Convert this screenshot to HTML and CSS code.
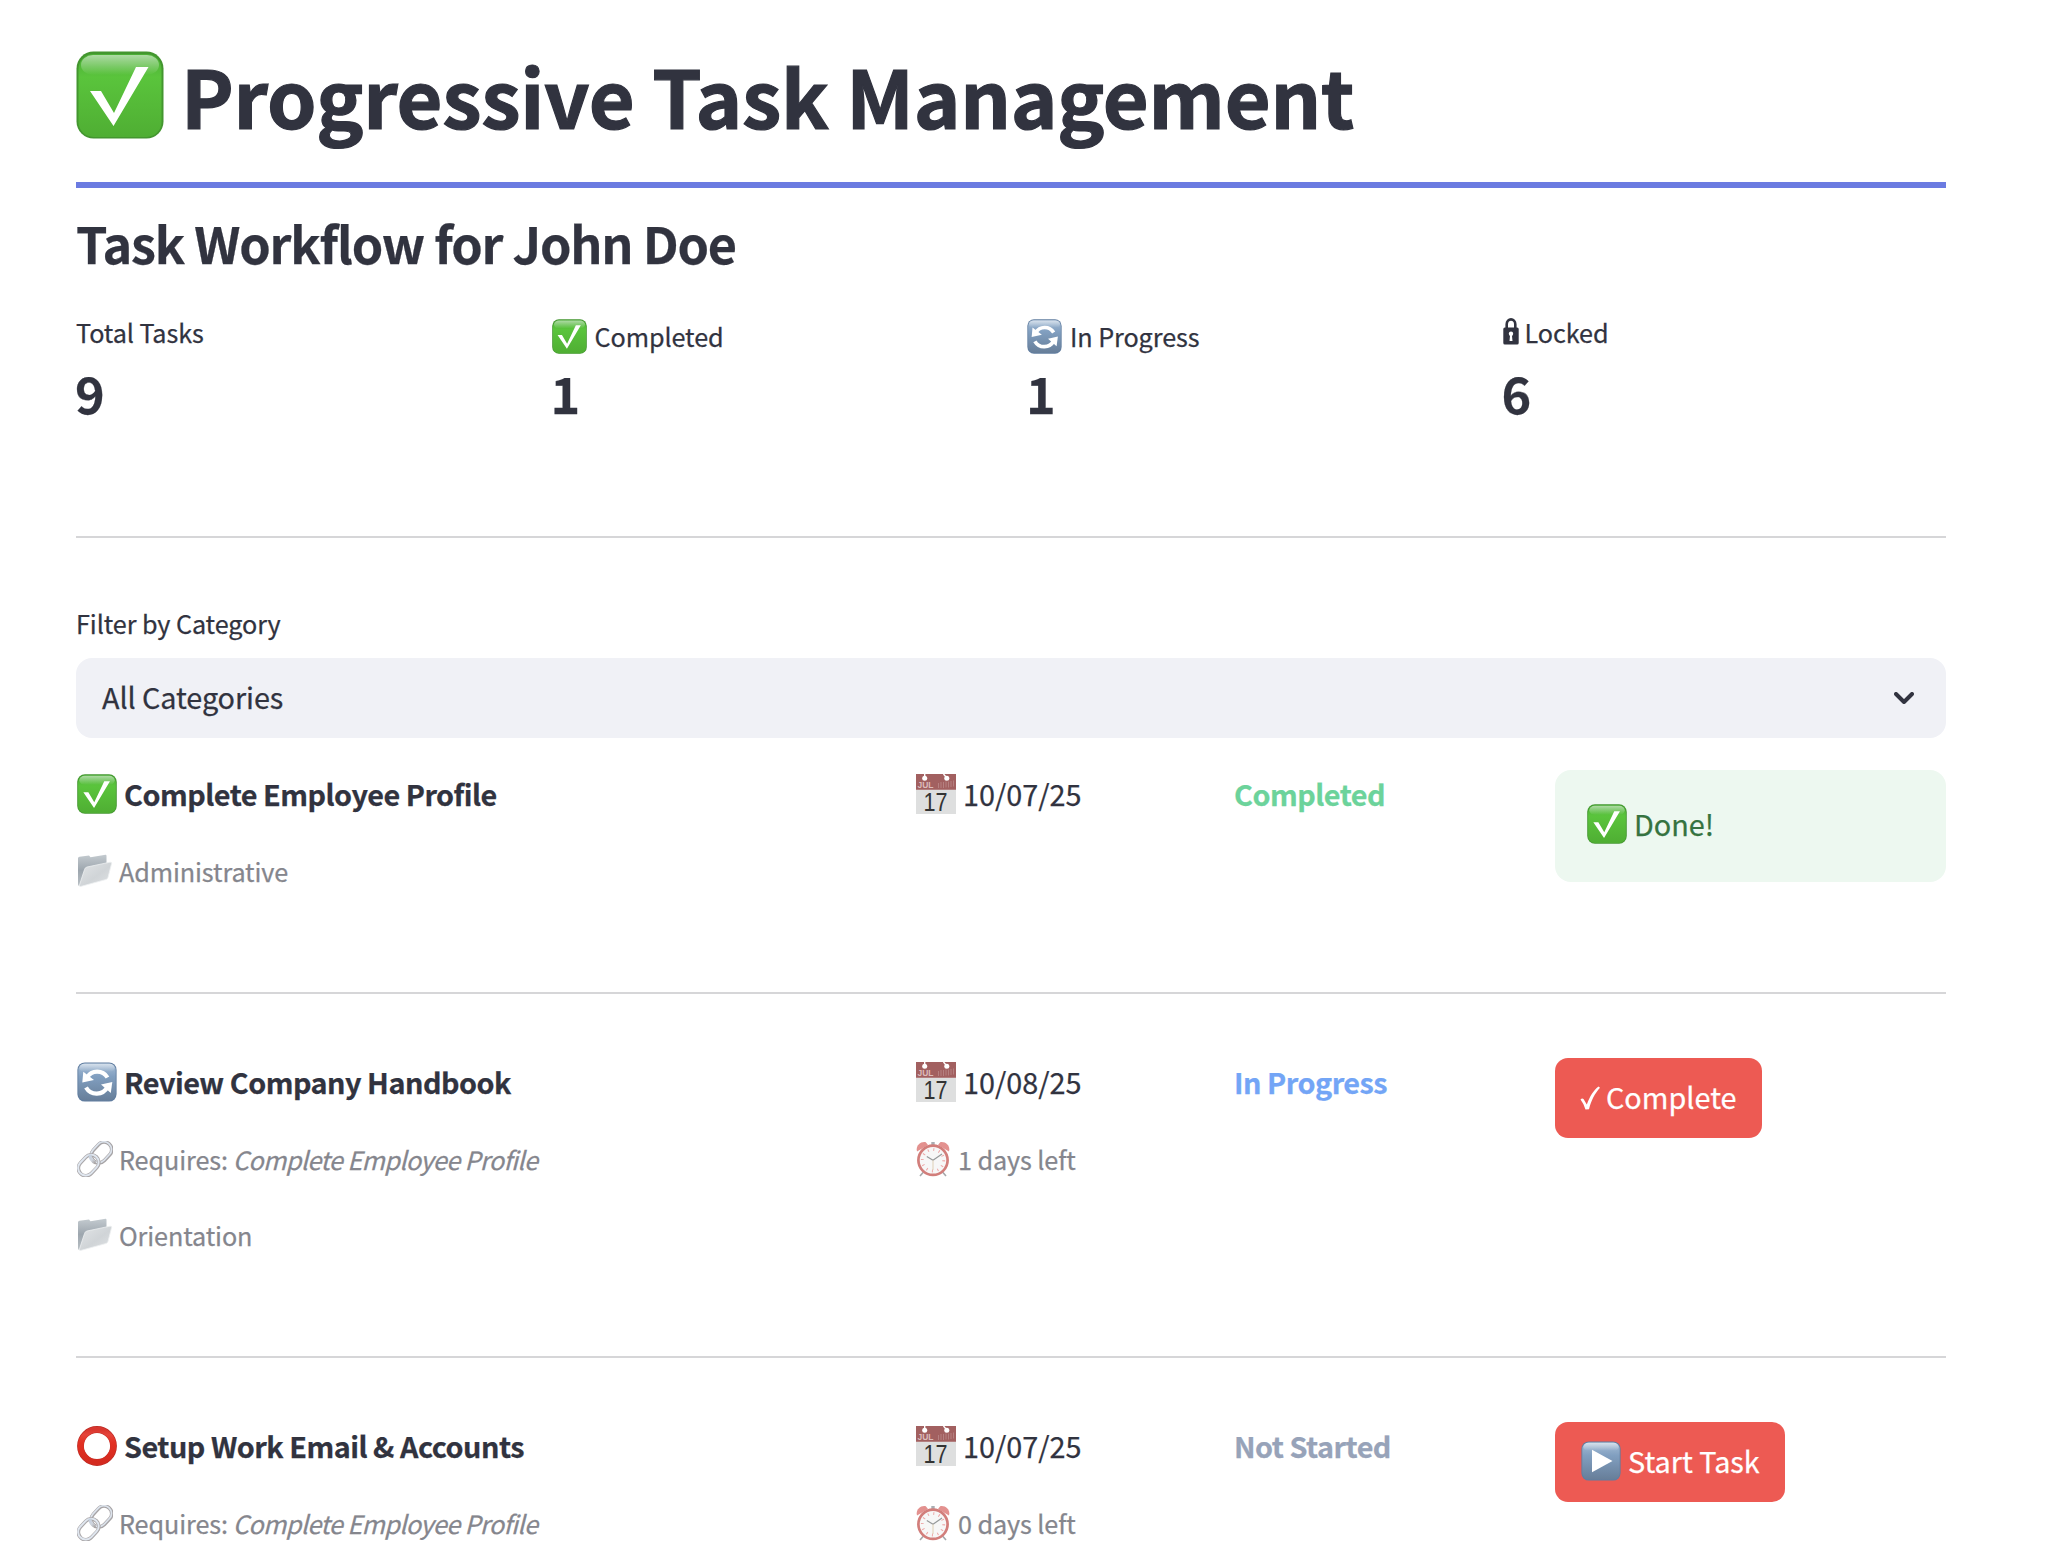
FILE: index.html
```html
<!DOCTYPE html>
<html lang="en">
<head>
<meta charset="utf-8">
<title>Progressive Task Management</title>
<link rel="stylesheet" href="styles.css">
</head>
<body>
<svg class="sprite" width="0" height="0" aria-hidden="true">
  <defs>
    <linearGradient id="green" x1="0" y1="0" x2="0" y2="1">
      <stop offset="0" stop-color="#4aae35"/><stop offset=".28" stop-color="#5ac43c"/><stop offset="1" stop-color="#4fae33"/>
    </linearGradient>
    <linearGradient id="gloss" x1="0" y1="0" x2="0" y2="1">
      <stop offset="0" stop-color="#fff" stop-opacity=".55"/><stop offset="1" stop-color="#fff" stop-opacity="0"/>
    </linearGradient>
    <linearGradient id="steel" x1="0" y1="0" x2="0" y2="1">
      <stop offset="0" stop-color="#a5bcd5"/><stop offset=".35" stop-color="#819fc0"/><stop offset="1" stop-color="#677e99"/>
    </linearGradient>
    <linearGradient id="ring" x1="0" y1="0" x2="0" y2="1">
      <stop offset="0" stop-color="#d8362e"/><stop offset=".15" stop-color="#e5443b"/><stop offset=".4" stop-color="#e23022"/><stop offset="1" stop-color="#d42a1f"/>
    </linearGradient>
    <linearGradient id="folderBack" x1="0" y1="0" x2="0" y2="1">
      <stop offset="0" stop-color="#c3cacf"/><stop offset=".5" stop-color="#9da6ae"/><stop offset="1" stop-color="#b9c0c5"/>
    </linearGradient>
    <linearGradient id="folderFront" x1="0" y1="0" x2="1" y2="1">
      <stop offset="0" stop-color="#e2e5e7"/><stop offset=".55" stop-color="#d0d4d7"/><stop offset="1" stop-color="#dfe2e4"/>
    </linearGradient>
    <linearGradient id="chain" x1="0" y1="0" x2="1" y2="1">
      <stop offset="0" stop-color="#c5d0df"/><stop offset=".5" stop-color="#cfd5de"/><stop offset="1" stop-color="#a59f9d"/>
    </linearGradient>
  </defs>
  <symbol id="check" viewBox="0 0 88 88">
    <rect x=".5" y=".5" width="87" height="87" rx="17" fill="#43962f"/>
    <rect x="2.5" y="3" width="83" height="83" rx="15" fill="url(#green)"/>
    <rect x="5" y="4" width="78" height="20" rx="12" fill="url(#gloss)"/>
    <path d="M14 40h11l13 22L60 16h12.500L37.500 75z" fill="#fff"/>
  </symbol>
  <symbol id="refresh" viewBox="0 0 40 40">
    <rect x=".4" y=".4" width="39.200" height="39.200" rx="7.500" fill="#607da0"/>
    <rect x="1.300" y="1.500" width="37.400" height="37" rx="6.500" fill="url(#steel)"/>
    <rect x="2.300" y="1.800" width="35.400" height="8" rx="5" fill="url(#gloss)"/>
    <path d="M10 15.500C14.500 8 25.500 7.500 30.500 15.500" fill="none" stroke="#fff" stroke-width="4.200"/>
    <path d="M5.300 20.500 6.300 9.800 17 18z" fill="#fff"/>
    <path d="M30.500 25C26 33.500 14 34 9 25.500" fill="none" stroke="#fff" stroke-width="4.200"/>
    <path d="M35.300 20 33.800 31 24 22.500z" fill="#fff"/>
  </symbol>
  <symbol id="play" viewBox="0 0 40 40">
    <rect x=".4" y=".4" width="39.200" height="39.200" rx="7.500" fill="#607da0"/>
    <rect x="1.300" y="1.500" width="37.400" height="37" rx="6.500" fill="url(#steel)"/>
    <rect x="2.300" y="1.800" width="35.400" height="8" rx="5" fill="url(#gloss)"/>
    <path d="M11 8.800 31.500 20 11 31.200z" fill="#fff"/>
  </symbol>
  <symbol id="circle" viewBox="0 0 40 40">
    <circle cx="20" cy="20" r="16.500" fill="none" stroke="#bd2b24" stroke-width="6.800"/>
    <circle cx="20" cy="20" r="16.300" fill="none" stroke="url(#ring)" stroke-width="5.800"/>
  </symbol>
  <symbol id="folder" viewBox="0 0 36 34">
    <path d="M1 4.500Q1 3 2.500 2.800L12 1.500 13.500 3.300 28.500.8Q29.500.7 29.500 2V24L3 32Q1 32.500 1 30z" fill="url(#folderBack)"/>
    <path d="M7.500 15.500Q8 13.500 10 13L33 8.200Q35 7.900 34.600 9.500L31 23.500Q30.700 25 29 25.500L3.500 32.500Q2.200 32.800 2.500 31z" fill="url(#folderFront)" stroke="#eef0f1" stroke-width=".8"/>
  </symbol>
  <symbol id="link" viewBox="0 0 36 36">
    <g fill="none">
      <rect x="-7.600" y="-11.500" width="15.200" height="23" rx="7.600" transform="translate(24.500 11.500) rotate(43)" stroke="#a7a4a6" stroke-width="3.600"/>
      <rect x="-7.600" y="-11.500" width="15.200" height="23" rx="7.600" transform="translate(24.200 11.200) rotate(43)" stroke="#dce3ec" stroke-width="1.700"/>
      <rect x="-7.600" y="-11.500" width="15.200" height="23" rx="7.600" transform="translate(11.600 24.300) rotate(43)" stroke="#aaa7a9" stroke-width="3.600"/>
      <rect x="-7.600" y="-11.500" width="15.200" height="23" rx="7.600" transform="translate(11.400 24.100) rotate(43)" stroke="#e0e7f0" stroke-width="1.900"/>
      <path d="M13 13.500Q13 19.500 18.500 22" stroke="url(#chain)" stroke-width="3"/>
    </g>
  </symbol>
  <symbol id="clock" viewBox="0 0 34 36">
    <path d="M7.500 31 4 35M26.500 31 30 35" stroke="#a5a7aa" stroke-width="1.600"/>
    <path d="M1 10.500C-.5 5 4 .2 9.800 1.200L12 4z" fill="#e3918f"/>
    <path d="M33 10.500C34.500 5 30 .2 24.200 1.200L22 4z" fill="#e3918f"/>
    <path d="M15.300 1h3.400v3h-3.400z" fill="#a9adb2"/>
    <circle cx="17" cy="19.300" r="14.600" fill="#f7f7f7" stroke="#d27e7b" stroke-width="2.700"/>
    <circle cx="17" cy="19.300" r="10.700" fill="none" stroke="#eda6a6" stroke-width="2.800" stroke-dasharray="1 4.603"/>
    <path d="M17 19.300 10.800 15.500M17 19.300 26 13" stroke="#96999a" stroke-width="1.200"/>
    <path d="M17 19.300V29" stroke="#d9c6a5" stroke-width=".8"/>
  </symbol>
  <symbol id="lock" viewBox="0 0 16 27">
    <path d="M3.700 11V6.200C3.700-.2 12.300-.2 12.300 6.200V11" fill="none" stroke="#31333f" stroke-width="2.600"/>
    <rect x=".3" y="9.500" width="15.400" height="17" rx="1.600" fill="#31333f"/>
    <circle cx="8" cy="15.700" r="2.200" fill="#fff"/><path d="M7.200 16h1.600l.7 7h-3z" fill="#fff"/>
  </symbol>
</svg>
<svg class="hidden" aria-hidden="true">
  <symbol id="calendar" viewBox="0 0 40 40">
    <rect width="40" height="40" fill="#dedfdf"/>
    <path d="M0 0H40V16H0z" fill="#a26060"/>
    <path d="M0 15.300H40V16H0z" fill="#b98a8a"/>
    <circle cx="8.700" cy="4.200" r="2.500" fill="#fff"/><circle cx="30.800" cy="4.200" r="2.500" fill="#fff"/>
    <path d="M8.700 4V0M30.800 4 27.500 0" stroke="#fff" stroke-width="1.400"/>
    <text x="1.500" y="14.300" class="cal-month" textLength="16" lengthAdjust="spacingAndGlyphs">JUL</text>
    <path d="M22.500 9v5M25 8v6M27.500 8v6M30 7.500v6M32.500 7.500v6M35 7v6M37.500 6.500v6" stroke="#b58080" stroke-width="1"/>
    <text x="7.500" y="36.700" class="cal-day" textLength="24" lengthAdjust="spacingAndGlyphs">17</text>
  </symbol>
</svg>

<main class="page">
  <h1 class="title"><svg class="title-icon"><use href="#check"/></svg><span>Progressive Task Management</span></h1>
  <h2 class="subtitle">Task Workflow for John Doe</h2>

  <section class="metrics">
    <div class="metric"><div class="metric-label">Total Tasks</div><div class="metric-value">9</div></div>
    <div class="metric"><div class="metric-label with-emoji"><svg class="emoji-sm"><use href="#check"/></svg><span>Completed</span></div><div class="metric-value">1</div></div>
    <div class="metric"><div class="metric-label with-emoji"><svg class="emoji-sm"><use href="#refresh"/></svg><span>In Progress</span></div><div class="metric-value">1</div></div>
    <div class="metric"><div class="metric-label"><svg class="lock"><use href="#lock"/></svg><span>Locked</span></div><div class="metric-value">6</div></div>
  </section>

  <hr class="rule">

  <label class="filter-label">Filter by Category</label>
  <div class="select"><span class="select-value">All Categories</span>
    <svg class="chevron" viewBox="0 0 20 12"><path d="M2 2 10 10 18 2" fill="none" stroke="#31333f" stroke-width="4" stroke-linecap="round" stroke-linejoin="round"/></svg>
  </div>

  <article class="task">
    <div class="col">
      <div class="line name"><svg class="emoji"><use href="#check"/></svg><span>Complete Employee Profile</span></div>
      <div class="caption"><svg class="folder"><use href="#folder"/></svg><span>Administrative</span></div>
    </div>
    <div class="col"><div class="line date"><svg class="emoji"><use href="#calendar"/></svg><span>10/07/25</span></div></div>
    <div class="col"><div class="line status done">Completed</div></div>
    <div class="col"><div class="alert"><svg class="emoji"><use href="#check"/></svg><span>Done!</span></div></div>
  </article>
  <hr class="rule">

  <article class="task">
    <div class="col">
      <div class="line name"><svg class="emoji"><use href="#refresh"/></svg><span>Review Company Handbook</span></div>
      <div class="caption"><svg class="link"><use href="#link"/></svg><span>Requires:</span><em>Complete Employee Profile</em></div>
      <div class="caption"><svg class="folder"><use href="#folder"/></svg><span>Orientation</span></div>
    </div>
    <div class="col">
      <div class="line date"><svg class="emoji"><use href="#calendar"/></svg><span>10/08/25</span></div>
      <div class="caption"><svg class="clock"><use href="#clock"/></svg><span>1 days left</span></div>
    </div>
    <div class="col"><div class="line status progress">In Progress</div></div>
    <div class="col"><button class="button"><svg class="tick" viewBox="0 0 20 24"><path d="M.5 13.500Q2 12 3.500 13L6.800 18.500C10 10 13.500 4.500 18.500.5L20 1.800C14.500 8 11.500 14 9 23.200L5.500 23.500Q4 18 .5 13.500z" fill="#fff"/></svg><span>Complete</span></button></div>
  </article>
  <hr class="rule">

  <article class="task">
    <div class="col">
      <div class="line name"><svg class="emoji"><use href="#circle"/></svg><span>Setup Work Email &amp; Accounts</span></div>
      <div class="caption"><svg class="link"><use href="#link"/></svg><span>Requires:</span><em>Complete Employee Profile</em></div>
    </div>
    <div class="col">
      <div class="line date"><svg class="emoji"><use href="#calendar"/></svg><span>10/07/25</span></div>
      <div class="caption"><svg class="clock"><use href="#clock"/></svg><span>0 days left</span></div>
    </div>
    <div class="col"><div class="line status idle">Not Started</div></div>
    <div class="col"><button class="button"><svg class="emoji"><use href="#play"/></svg><span>Start Task</span></button></div>
  </article>
</main>
</body>
</html>
```
FILE: styles.css
```css
* { box-sizing: border-box; }

body {
  margin: 0;
  background: #fff;
  color: #31333f;
  font-family: "Noto Sans CJK SC", "Noto Sans", sans-serif;
  font-size: 28.8px;
  line-height: 48px;
  white-space: nowrap;
  -webkit-text-stroke: .25px currentColor;
}

.sprite { display: block; position: absolute; }
.hidden { display: none; }
svg { flex: none; }

.page {
  width: 1870px;
  margin-left: 76px;
  padding-top: 40px;
}

.title {
  display: flex;
  align-items: flex-start;
  height: 148px;
  margin: 0;
  padding-top: 1px;
  border-bottom: 6px solid #6b7be1;
  font-size: 79.2px;
  font-weight: 700;
  line-height: 107px;
  letter-spacing: -.25px;
  -webkit-text-stroke-width: 1.2px;
}
.title-icon { width: 88px; height: 88px; margin: 10px 17px 0 0; }

.subtitle {
  margin: 21px 0 0;
  font-size: 50.4px;
  font-weight: 600;
  line-height: 68px;
  letter-spacing: -1.2px;
}

.metrics {
  display: grid;
  grid-template-columns: repeat(4, 1fr);
  column-gap: 32px;
  height: 259px;
  padding-top: 35px;
}
.metric { display: flex; flex-direction: column; }
.metric-label {
  display: flex;
  align-items: flex-start;
  height: 47px;
  font-size: 25.2px;
  line-height: 40px;
  letter-spacing: -.08px;
}
.metric-label.with-emoji { line-height: 48px; }
.metric-value { margin-left: -1px; font-size: 50.4px; font-weight: 600; line-height: 68px; }
.emoji-sm { width: 35px; height: 35px; margin: 7px 8px 0 0; }
.lock { width: 16px; height: 27px; margin: 6px 6px 0 0; }

.rule { height: 2px; margin: 0; border: 0; background: #d6d6d8; }

.filter-label {
  display: block;
  margin-top: 65px;
  font-size: 25.2px;
  line-height: 40px;
  letter-spacing: -.08px;
}
.select {
  display: flex;
  align-items: center;
  justify-content: space-between;
  height: 80px;
  margin: 15px 0 32px;
  padding: 0 32px 0 26px;
  border-radius: 16px;
  background: #f0f1f6;
}
.select-value { padding-bottom: 3px; letter-spacing: -.08px; }
.chevron { width: 20px; height: 12px; }

.task {
  display: grid;
  grid-template-columns: 807px 287px 289px 391px;
  column-gap: 32px;
  padding-bottom: 100px;
}
.task + .rule + .task { padding-top: 64px; }
.task:last-child { padding-bottom: 0; }

.line, .caption { display: flex; align-items: flex-start; }
.emoji { width: 40px; height: 40px; margin: 4px 7px 0 1px; }
.name, .status { font-weight: 700; letter-spacing: -.5px; }
.done { color: #6cd39b; }
.progress { color: #73a5f6; }
.idle { color: #97a3b9; }

.caption {
  height: 42px;
  margin-top: 32px;
  color: #85868d;
  font-size: 25.2px;
  line-height: 42px;
  letter-spacing: -.1px;
}
.caption + .caption { margin-top: 34px; }
.caption em { margin-left: 5px; letter-spacing: -.6px; }
.folder { width: 36px; height: 34px; margin: 4px 6px 0 1px; }
.link { width: 36px; height: 36px; margin: 3px 6px 0 1px; }
.clock { width: 34px; height: 36px; margin: 3px 8px 0 1px; }

.alert {
  display: flex;
  align-items: flex-start;
  height: 112px;
  padding: 30px 31px;
  border-radius: 16px;
  background: #edf8f0;
  color: #357340;
}

.button {
  display: inline-flex;
  align-items: flex-start;
  height: 80px;
  padding: 15px 25px 0;
  border: 0;
  border-radius: 13px;
  background: #ed5a53;
  color: #fff;
  font: inherit;
}
.tick { width: 20px; height: 24px; margin: 13px 6px 0 0; }

.cal-month { font: 700 9px "Liberation Sans", sans-serif; fill: #dcbcbc; -webkit-text-stroke: 0; stroke: none; }
.cal-day { font: 25px "Liberation Sans", sans-serif; fill: #333; }
```
